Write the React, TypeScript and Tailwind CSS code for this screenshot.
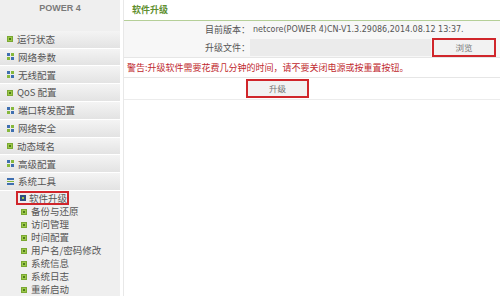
import React from 'react';

const font = { fontFamily: '"Noto Sans CJK SC", "Liberation Sans", sans-serif' };

const DotIcon = () => (
  <span className="flex h-[6px] w-[6px] shrink-0 items-center justify-center bg-[#9cc94a] border border-[#7aa832]">
    <span className="h-[2px] w-[2px] bg-[#4f7a1c]" />
  </span>
);

const GridIcon = () => (
  <span className="grid h-[7px] w-[7px] shrink-0 grid-cols-2 gap-[1px]">
    <span className="bg-[#3f6fb0]" />
    <span className="bg-[#86b83c]" />
    <span className="bg-[#86b83c]" />
    <span className="bg-[#3f6fb0]" />
  </span>
);

const BarsIcon = () => (
  <span className="flex h-[7px] w-[7px] shrink-0 flex-col justify-between">
    <span className="h-[2px] bg-[#3f6fb0]" />
    <span className="h-[1px] bg-[#86b83c]" />
    <span className="h-[2px] bg-[#3f6fb0]" />
  </span>
);

const menu: { label: string; icon: 'dot' | 'grid' | 'bars' }[] = [
  { label: '运行状态', icon: 'dot' },
  { label: '网络参数', icon: 'grid' },
  { label: '无线配置', icon: 'grid' },
  { label: 'QoS 配置', icon: 'dot' },
  { label: '端口转发配置', icon: 'grid' },
  { label: '网络安全', icon: 'grid' },
  { label: '动态域名', icon: 'dot' },
  { label: '高级配置', icon: 'grid' },
  { label: '系统工具', icon: 'bars' },
];

const subMenu = ['备份与还原', '访问管理', '时间配置', '用户名/密码修改', '系统信息', '系统日志', '重新启动'];

export default function App() {
  return (
    <div className="flex h-[296px] w-[500px] overflow-hidden bg-white" style={font}>
      <aside className="flex w-[120px] flex-col bg-[#efefef]">
        <div className="flex h-[31px] items-start justify-center pt-[2px] text-[9px] font-bold text-[#7a7a7a]" style={{ fontFamily: '"Liberation Sans", sans-serif' }}>
          POWER 4
        </div>
        {menu.map((m) => (
          <div
            key={m.label}
            className="flex h-[18px] items-center gap-[4px] border-b border-white bg-gradient-to-b from-[#f4f4f4] to-[#e3e3e3] pl-[7px] text-[9.5px] text-[#555]"
          >
            {m.icon === 'dot' && <DotIcon />}
            {m.icon === 'grid' && <GridIcon />}
            {m.icon === 'bars' && <BarsIcon />}
            <span>{m.label}</span>
          </div>
        ))}
        <div className="flex flex-col">
          <div className="ml-[16px] flex h-[14px] w-[53px] items-center gap-[3px] whitespace-nowrap border-2 border-[#d0262b] pl-[2px] text-[9.5px] text-[#555]">
            <span className="flex h-[6px] w-[6px] shrink-0 items-center justify-center bg-[#2e4f7e]">
              <span className="h-[2px] w-[2px] bg-[#9cc94a]" />
            </span>
            <span>软件升级</span>
          </div>
          {subMenu.map((s) => (
            <div key={s} className="flex h-[13px] items-center gap-[4px] whitespace-nowrap pl-[21px] text-[9.5px] text-[#555]">
              <DotIcon />
              <span>{s}</span>
            </div>
          ))}
        </div>
      </aside>

      <main className="ml-[3px] flex flex-1 flex-col border-l border-[#e8e8e8]">
        <div className="flex h-[21px] items-center border-b border-[#b5cf98] pl-[8px] text-[9px] font-bold text-[#5f8f30]">
          软件升级
        </div>
        <div className="flex h-[17px] items-center bg-[#f7f7f7] text-[9px] text-[#555]">
          <span className="w-[126px] text-right">目前版本：</span>
          <span className="pl-[3px] text-[#555]" style={{ fontFamily: '"DejaVu Sans", sans-serif', fontSize: '8px' }}>
            netcore(POWER 4)CN-V1.3.29086,2014.08.12 13:37.
          </span>
        </div>
        <div className="flex h-[20px] items-center border-b border-[#e6e6e6] bg-[#f7f7f7] text-[9px] text-[#555]">
          <span className="w-[126px] text-right">升级文件：</span>
          <span className="h-[17px] w-[181px] bg-[#ebebeb]" />
          <span className="ml-[1px] flex h-[19px] w-[64px] items-center justify-center border-2 border-[#d0262b] bg-[#f2f2f2] text-[8.5px] text-[#777]">
            浏览
          </span>
        </div>
        <div className="flex h-[20px] items-center border-b border-[#e6e6e6] pl-[3px] text-[9px] text-[#c0282e]">
          警告:升级软件需要花费几分钟的时间，请不要关闭电源或按重置按钮。
        </div>
        <div className="flex h-[22px] items-center border-b border-[#ececec]">
          <span className="ml-[122px] flex h-[19px] w-[63px] items-center justify-center border-2 border-[#d0262b] bg-[#f2f2f2] text-[8.5px] text-[#777]">
            升级
          </span>
        </div>
      </main>
    </div>
  );
}
